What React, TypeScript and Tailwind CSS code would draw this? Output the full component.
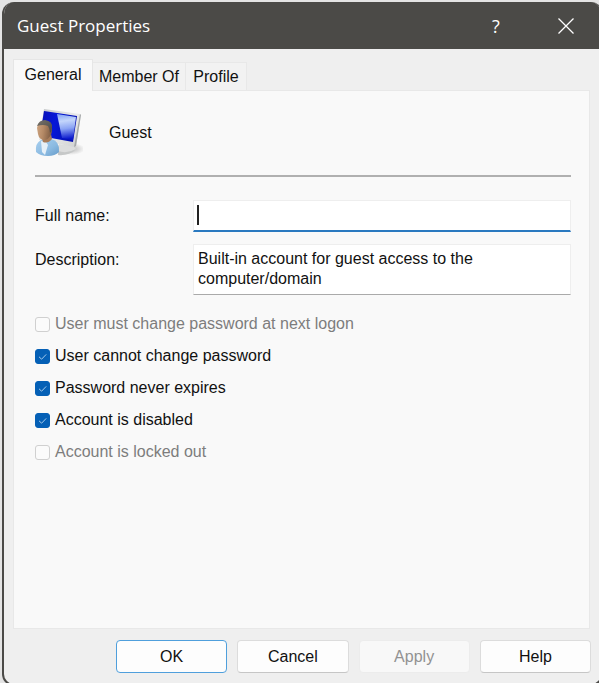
import { useState } from "react";

type Option = { id: string; label: string; checked: boolean; disabled: boolean };

const initialOptions: Option[] = [
  { id: "must-change", label: "User must change password at next logon", checked: false, disabled: true },
  { id: "cannot-change", label: "User cannot change password", checked: true, disabled: false },
  { id: "never-expires", label: "Password never expires", checked: true, disabled: false },
  { id: "disabled", label: "Account is disabled", checked: true, disabled: false },
  { id: "locked", label: "Account is locked out", checked: false, disabled: true },
];

function UserIcon() {
  return (
    <svg width="48" height="50" viewBox="0 0 48 50" aria-hidden="true">
      <defs>
        <linearGradient id="frame" x1="0" y1="0" x2="1" y2="1">
          <stop offset="0" stopColor="#c3c6c7" />
          <stop offset="0.5" stopColor="#e9eaea" />
          <stop offset="1" stopColor="#cfd0d0" />
        </linearGradient>
        <linearGradient id="screen" x1="0" y1="0" x2="1" y2="0.2">
          <stop offset="0" stopColor="#0a0fb4" />
          <stop offset="0.45" stopColor="#0618d8" />
          <stop offset="1" stopColor="#0510b0" />
        </linearGradient>
        <linearGradient id="glare" x1="0" y1="0" x2="0.1" y2="1">
          <stop offset="0" stopColor="#7d9ff5" />
          <stop offset="0.3" stopColor="#c4d6fb" />
          <stop offset="0.6" stopColor="#8ba4f4" />
          <stop offset="1" stopColor="#0a18cc" />
        </linearGradient>
        <linearGradient id="shirt" x1="0" y1="0" x2="1" y2="1">
          <stop offset="0" stopColor="#a9d0ef" />
          <stop offset="0.6" stopColor="#8bbae1" />
          <stop offset="1" stopColor="#669cca" />
        </linearGradient>
        <linearGradient id="face" x1="0" y1="0" x2="1" y2="0.2">
          <stop offset="0" stopColor="#d0a682" />
          <stop offset="0.5" stopColor="#b58a66" />
          <stop offset="1" stopColor="#825f45" />
        </linearGradient>
        <linearGradient id="hair" x1="0" y1="0" x2="1" y2="1">
          <stop offset="0" stopColor="#77736b" />
          <stop offset="1" stopColor="#4a4845" />
        </linearGradient>
        <radialGradient id="shadow">
          <stop offset="0" stopColor="#8c8c8c" stopOpacity="0.6" />
          <stop offset="1" stopColor="#8c8c8c" stopOpacity="0" />
        </radialGradient>
      </defs>
      <ellipse cx="36" cy="40" rx="14" ry="6" fill="url(#shadow)" />
      <path d="M24 35 L38 37 L41 40 Q36 46 25 46 L20 42 Z" fill="#dcdddd" />
      <path d="M23 42 Q32 45 41 40 L38 43 Q31 47 23 46 Z" fill="#c6c8c8" />
      <path d="M9 0 L45 5 Q46 5 46 6 L41 37 Q41 38 39 38 L4 31 Z" fill="url(#frame)" />
      <path d="M45 5 L46 6 L41 37 L39 38 Z" fill="#a6a9aa" />
      <path d="M9 2 L42 7 L38 33 L5 27 Z" fill="url(#screen)" />
      <path d="M22 5 L41 8 L38 31 L27 29 Z" fill="url(#glare)" />
      <path d="M1 43 Q0 34 6 31 L16 30 Q25 32 24 43 Q20 47 13 47 Q5 47 1 43 Z" fill="url(#shirt)" />
      <path d="M6 32 L7 43 L10 46 L13 36 L11 33 Z" fill="#e6f0f8" />
      <path d="M6 26 L16 25 L17 30 Q13 35 8 33 Z" fill="#a87d5a" />
      <path d="M2 19 Q3 12 10 12 Q17 13 17 20 Q17 29 10 31 Q4 31 3 25 Z" fill="url(#face)" />
      <path d="M2 17 Q4 11 10 11 Q18 12 17 19 Q17 22 15 24 Q15 20 13 17 Q8 15 2 17 Z" fill="url(#hair)" />
    </svg>
  );
}

export default function App() {
  const [options, setOptions] = useState(initialOptions);
  const [name, setName] = useState("");
  const [description, setDescription] = useState("Built-in account for guest access to the computer/domain");

  const toggle = (id: string) =>
    setOptions(options.map((o) => (o.id === id ? { ...o, checked: !o.checked } : o)));

  const button = "h-[33px] flex-1 rounded-sm border bg-[#fdfdfd]";

  return (
    <div className="h-screen overflow-hidden bg-[#e4e4e4] pt-0.5 pl-0.5 font-['Liberation_Sans',Arial,sans-serif] text-base leading-5 text-[#111]">
      <div className="-mr-1 flex min-h-[calc(100%+3px)] flex-col overflow-hidden rounded-xl border-2 border-t-0 border-[#4b4a47] bg-[#efefef]">
        <header className="flex h-[47px] shrink-0 items-center bg-[#4b4a47] pl-[13px] text-white">
          <h1 className="flex-1 font-['Open_Sans','Noto_Sans',sans-serif] text-[17px]">Guest Properties</h1>
          <button aria-label="Help" className="flex h-full w-[70px] items-center justify-center font-['Open_Sans','Noto_Sans',sans-serif] text-lg">
            ?
          </button>
          <button aria-label="Close" className="flex h-full w-[70px] items-center justify-center">
            <svg width="16" height="16" viewBox="0 0 16 16" stroke="currentColor" strokeWidth="1.3">
              <path d="M.5 .5 15.5 15.5 M15.5 .5 .5 15.5" />
            </svg>
          </button>
        </header>

        <div className="flex flex-1 flex-col pt-2.5 pr-[11px] pl-[9px]">
          <div role="tablist" className="flex items-end">
            <button role="tab" aria-selected="true" className="relative z-10 -mb-px h-8 w-20 border border-b-0 border-[#e6e6e6] bg-[#f9f9f9] pb-0.5">
              General
            </button>
            <button role="tab" aria-selected="false" className="h-7 w-[93px] border-t border-r border-[#e8e8e8] bg-[#f2f2f2]">
              Member Of
            </button>
            <button role="tab" aria-selected="false" className="h-7 w-[61px] border-t border-r border-[#e8e8e8] bg-[#f2f2f2]">
              Profile
            </button>
          </div>

          <main role="tabpanel" className="flex h-[539px] flex-col border border-[#e8e8e8] bg-[#f9f9f9] pt-[18px] pr-[18px] pl-[21px]">
            <div className="flex h-[68px] gap-[26px] border-b-2 border-[#b0b0b0]">
              <UserIcon />
              <h2 className="pt-3.5">Guest</h2>
            </div>

            <div className="mt-[23px] flex">
              <label htmlFor="name" className="w-[158px] pt-1.5">Full name:</label>
              <div className="relative flex-1">
                <input
                  id="name"
                  value={name}
                  onChange={(e) => setName(e.target.value)}
                  className="h-8 w-full border border-b-2 border-[#eee] border-b-[#2a79c0] bg-white px-1 caret-transparent outline-none"
                />
                <span className="absolute top-[5px] left-1 h-5 w-0.5 bg-[#222]" />
              </div>
            </div>

            <div className="mt-3 flex">
              <label htmlFor="description" className="w-[158px] pt-1.5">Description:</label>
              <textarea
                id="description"
                value={description}
                onChange={(e) => setDescription(e.target.value)}
                className="h-[51px] flex-1 resize-none overflow-hidden border border-[#eee] border-b-[#aaa] bg-white px-1 pt-1 outline-none"
              />
            </div>

            <div className="mt-[19px] flex flex-col gap-3">
              {options.map((o) => (
                <label key={o.id} className={`flex h-5 items-center gap-[5px] ${o.disabled ? "text-[#7d7d7d]" : ""}`}>
                  <span className="relative flex">
                    <input
                      type="checkbox"
                      checked={o.checked}
                      disabled={o.disabled}
                      onChange={() => toggle(o.id)}
                      className="size-[15px] appearance-none rounded-[3px] border border-[#d0d0d0] bg-[#fbfbfb] checked:border-[#0560b6] checked:bg-[#0560b6]"
                    />
                    {o.checked && (
                      <svg className="pointer-events-none absolute inset-0" width="15" height="15" viewBox="0 0 15 15" fill="none" stroke="#a5caeb" strokeWidth="1">
                        <path d="M4 7.8 6.6 10.2 11.2 5.4" />
                      </svg>
                    )}
                  </span>
                  {o.label}
                </label>
              ))}
            </div>
          </main>

          <footer className="-mr-px mt-[11px] flex gap-2.5 pl-[103px]">
            <button className={`${button} border-[#4f9fdc]`}>OK</button>
            <button className={`${button} border-[#dcdcdc] border-b-[#c6c6c6]`}>Cancel</button>
            <button disabled className="h-[33px] flex-1 rounded-sm border border-[#ececec] bg-[#f8f8f8] text-[#929292]">
              Apply
            </button>
            <button className={`${button} border-[#dcdcdc] border-b-[#c6c6c6]`}>Help</button>
          </footer>
        </div>
      </div>
    </div>
  );
}
